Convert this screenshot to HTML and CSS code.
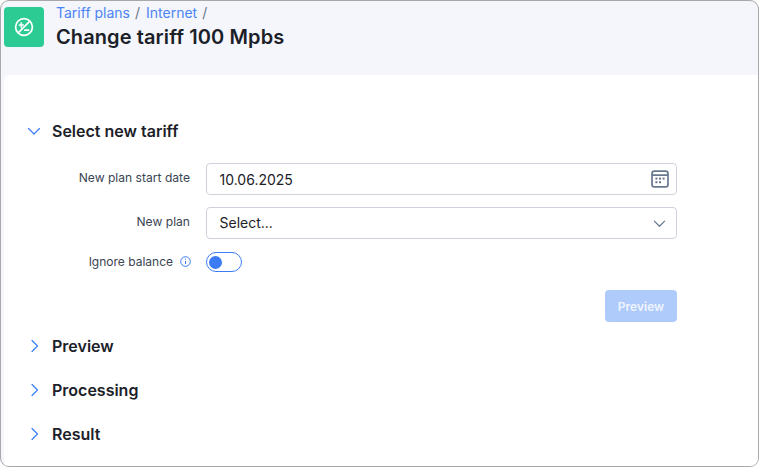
FILE: index.html
```html
<!DOCTYPE html>
<html lang="en">
<head>
<meta charset="utf-8">
<title>Change tariff 100 Mpbs</title>
<link rel="stylesheet" href="styles.css">
</head>
<body>
<div class="window">
  <header class="page-head">
    <div class="app-icon">
      <svg width="20" height="20" viewBox="0 0 20 20" fill="none" stroke="#fff" stroke-width="1.7" stroke-linecap="round">
        <circle cx="10" cy="10" r="8.4"/>
        <path d="M4.4 15.6 15.6 4.4"/>
        <path d="M5.4 8h3.8M7.3 6.1v3.8"/>
        <path d="M10.8 13.2h3.8"/>
      </svg>
    </div>
    <div class="head-text">
      <nav class="crumbs"><a>Tariff plans</a><span class="sep">/</span><a>Internet</a><span class="sep">/</span></nav>
      <h1>Change tariff 100 Mpbs</h1>
    </div>
  </header>
  <main class="card">
    <section class="section open">
      <h2 class="sec-title">
        <svg class="chev" width="14" height="14" viewBox="0 0 14 14" fill="none" stroke="#3b7cf4" stroke-width="1.2" stroke-linecap="round" stroke-linejoin="round"><path d="M1.5 4.5 7 10l5.5-5.5"/></svg>
        Select new tariff
      </h2>
      <div class="form">
        <div class="row">
          <label class="lbl">New plan start date</label>
          <div class="field">
            <span>10.06.2025</span>
            <svg width="18" height="18" viewBox="0 0 18 18" fill="none" stroke="#68778d" stroke-width="1.7"><rect x="1" y="1.2" width="16" height="15.6" rx="2.4"/><path d="M1 5.2h16"/><g fill="#68778d" stroke="none"><rect x="4.4" y="7.6" width="2" height="2"/><rect x="8" y="7.6" width="2" height="2"/><rect x="11.6" y="7.6" width="2" height="2"/><rect x="4.4" y="11.2" width="2" height="2"/><rect x="8" y="11.2" width="2" height="2"/></g></svg>
          </div>
        </div>
        <div class="row">
          <label class="lbl">New plan</label>
          <div class="field">
            <span class="placeholder">Select...</span>
            <svg class="caret" width="13" height="13" viewBox="0 0 14 14" fill="none" stroke="#68778d" stroke-width="1.3" stroke-linecap="round" stroke-linejoin="round"><path d="M1.5 4.5 7 10l5.5-5.5"/></svg>
          </div>
        </div>
        <div class="row toggle-row">
          <label class="lbl">Ignore balance<svg class="info" width="11" height="11" viewBox="0 0 11 11" fill="none" stroke="#3b7cf4" stroke-width="1"><circle cx="5.5" cy="5.5" r="4.8"/><path d="M5.5 5v3M5.5 2.6v1.1"/></svg></label>
          <div class="toggle"><span class="knob"></span></div>
        </div>
        <div class="actions"><button class="btn" disabled>Preview</button></div>
      </div>
    </section>
    <section class="section">
      <h2 class="sec-title"><svg class="chev" width="14" height="14" viewBox="0 0 14 14" fill="none" stroke="#3b7cf4" stroke-width="1.2" stroke-linecap="round" stroke-linejoin="round"><path d="M5 1.5 10.5 7 5 12.5"/></svg>Preview</h2>
    </section>
    <section class="section">
      <h2 class="sec-title"><svg class="chev" width="14" height="14" viewBox="0 0 14 14" fill="none" stroke="#3b7cf4" stroke-width="1.2" stroke-linecap="round" stroke-linejoin="round"><path d="M5 1.5 10.5 7 5 12.5"/></svg>Processing</h2>
    </section>
    <section class="section">
      <h2 class="sec-title"><svg class="chev" width="14" height="14" viewBox="0 0 14 14" fill="none" stroke="#3b7cf4" stroke-width="1.2" stroke-linecap="round" stroke-linejoin="round"><path d="M5 1.5 10.5 7 5 12.5"/></svg>Result</h2>
    </section>
  </main>
</div>
</body>
</html>
```
FILE: styles.css
```css
* { box-sizing: border-box; }
html, body { margin: 0; padding: 0; background: #fff; }
body { font-family: Inter, "Liberation Sans", sans-serif; color: #1c2129; }
.window {
  width: 759px; height: 467px; overflow: hidden;
  border: 1px solid #a8a8a8; border-radius: 9px;
  background: #f4f6fb;
  display: flex; flex-direction: column;
}
.page-head {
  height: 74px; flex: none;
  display: flex; align-items: flex-start; gap: 12px;
  padding: 6px 0 0 3px;
}
.app-icon {
  width: 40px; height: 40px; border-radius: 4px; background: #2dcb94;
  display: flex; align-items: center; justify-content: center; flex: none;
}
.head-text { display: flex; flex-direction: column; }
.crumbs { font-size: 14px; line-height: 17px; margin-top: -3px; color: #6a7686; display: flex; }
.crumbs a { color: #4c84f6; }
.sep { margin: 0 6px 0 5px; }
.crumbs .sep:last-child { margin-right: 0; }
h1 { margin: 2px 0 0; font-size: 20px; line-height: 28px; font-weight: 600; letter-spacing: 0.1px; color: #1c2129; }
.card {
  flex: 1; margin-left: 3px; background: #fff;
  border-top-left-radius: 6px;
  padding-top: 34px;
}
.section { padding-left: 22px; }
.sec-title {
  margin: 0; height: 44px;
  display: flex; align-items: center;
  font-size: 16px; font-weight: 600; color: #1c2129;
}
.sec-title .chev { margin-right: 11px; width: 14px; height: 14px; flex: none; margin-left: 1px; }
.form { width: 651px; padding-top: 10px; padding-bottom: 2px; }
.row { display: flex; align-items: center; height: 32px; margin-bottom: 12px; }
.row + .row { margin-bottom: 13px; }
.lbl {
  width: 164px; flex: none; text-align: right; font-size: 12.1px; line-height: 16px;
  color: #3a4452; margin-top: -3px;
  display: block;
}
.field {
  margin-left: 16px; flex: 1; height: 32px;
  border: 1px solid #ced3db; border-radius: 4px;
  display: flex; align-items: center; justify-content: space-between;
  padding: 0 7px 0 12.5px;
  font-size: 14px; color: #1c2129;
}
.placeholder { line-height: 17px; margin-top: -1px; }
.caret { margin-right: 3px; }
.row.toggle-row { height: 20px; margin-bottom: 18px; }
.toggle-row .lbl { margin-top: 0; width: 165px; font-size: 12px; }
.info { vertical-align: -1px; margin-left: 7px; }
.toggle {
  margin-left: 15px; width: 36px; height: 20px;
  border: 1px solid #3b7cf4; border-radius: 10px;
  display: flex; align-items: center; padding-left: 2px;
}
.knob { width: 13px; height: 13px; border-radius: 50%; background: #3b7cf4; }
.actions { display: flex; justify-content: flex-end; height: 32px; }
.btn {
  width: 72px; height: 32px; border: 0; border-radius: 4px;
  background: #aecbfb; color: #eef4ff;
  font: 600 12px Inter, "Liberation Sans", sans-serif;
  padding: 0;
}
```
